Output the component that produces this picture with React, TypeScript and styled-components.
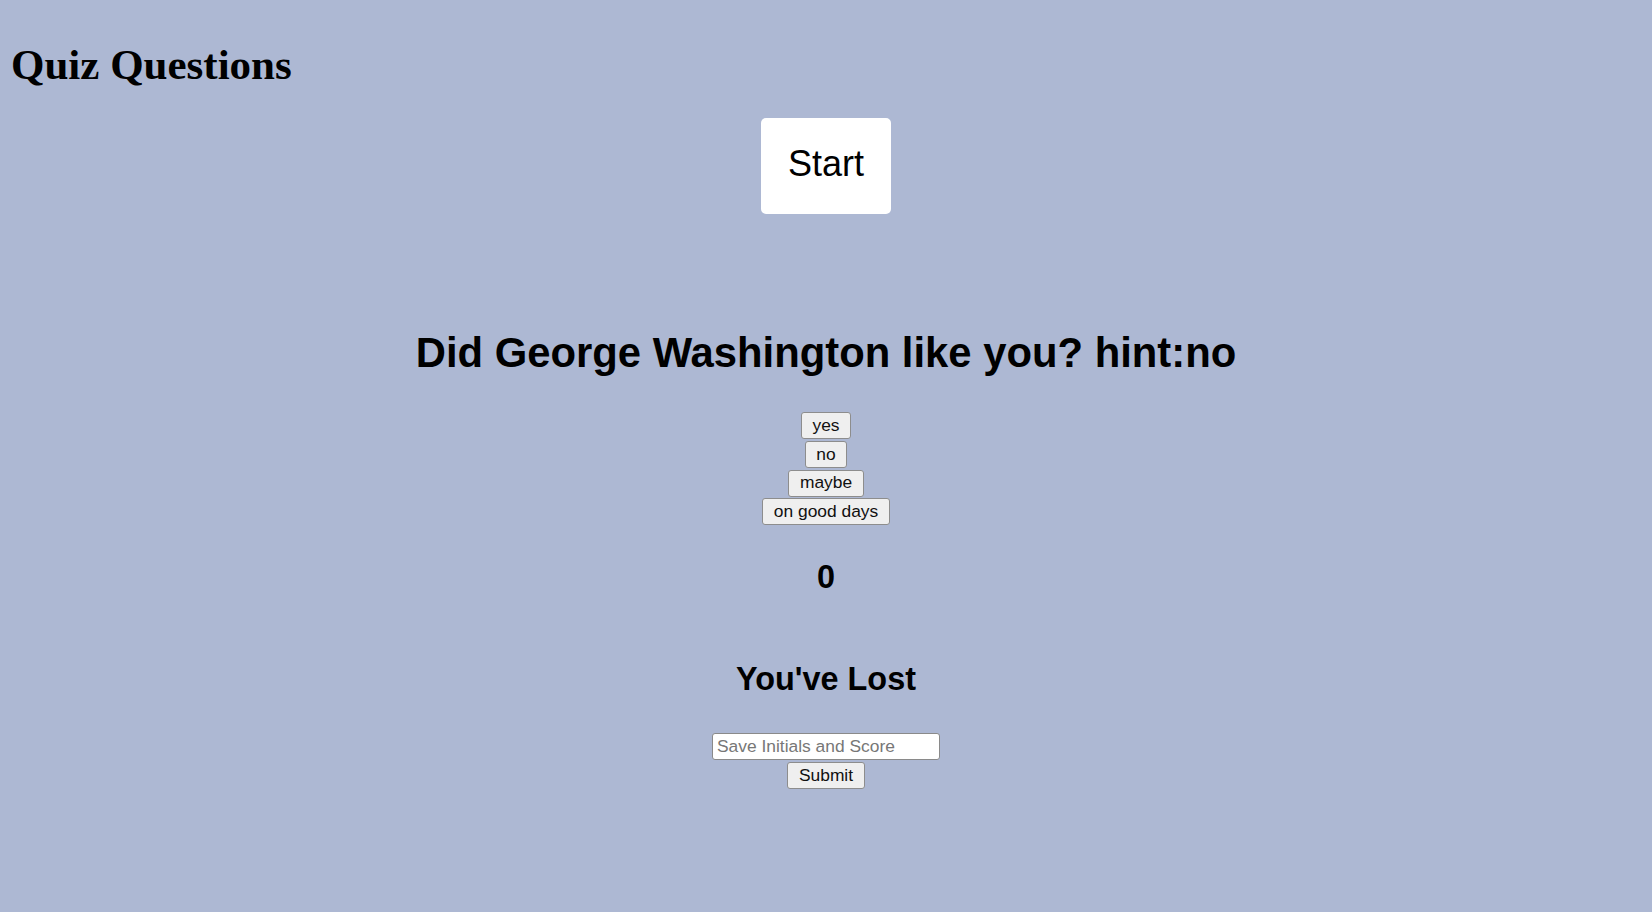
import React from "react";
import styled, { createGlobalStyle } from "styled-components";

const GlobalStyle = createGlobalStyle`
  html, body {
    margin: 0;
    padding: 0;
    background: #adb8d3;
  }
  body {
    font-family: "Liberation Sans", Arial, sans-serif;
    color: #000;
    min-height: 912px;
  }
`;

const Page = styled.div`
  display: flex;
  flex-direction: column;
  min-height: 912px;
  box-sizing: border-box;
`;

const Title = styled.h1`
  margin: 41px 0 0 11px;
  font-family: "Liberation Serif", "Times New Roman", serif;
  font-weight: 700;
  font-size: 43px;
  line-height: 48px;
`;

const Main = styled.main`
  display: flex;
  flex-direction: column;
  align-items: center;
`;

const StartButton = styled.button`
  margin-top: 29px;
  width: 130px;
  height: 96px;
  padding: 0 0 4px;
  background: #ffffff;
  border: none;
  border-radius: 5px;
  font-family: "Liberation Sans", Arial, sans-serif;
  font-size: 36px;
  color: #000;
  cursor: pointer;
`;

const Question = styled.h2`
  margin: 114.6px 0 0;
  font-size: 41.8px;
  font-weight: 700;
  line-height: 48px;
  text-align: center;
`;

const Answers = styled.div`
  margin-top: 35.4px;
  display: flex;
  flex-direction: column;
  align-items: center;
  gap: 1.8px;
`;

const SmallButton = styled.button`
  height: 27px;
  padding: 0 10.6px;
  box-sizing: border-box;
  background: #efefef;
  border: 1.3px solid #8d8d8d;
  border-radius: 3px;
  font-family: "Liberation Sans", Arial, sans-serif;
  font-size: 17.4px;
  line-height: 1;
  color: #111;
  cursor: pointer;
`;

const Heading = styled.h2<{ $gap: number }>`
  margin: ${(p) => p.$gap}px 0 0;
  font-size: 32.4px;
  font-weight: 700;
  line-height: 36px;
  text-align: center;
`;

const SaveForm = styled.form`
  margin-top: 35.5px;
  display: flex;
  flex-direction: column;
  align-items: center;
  gap: 2px;
`;

const Initials = styled.input`
  width: 228px;
  height: 27px;
  box-sizing: border-box;
  padding: 1px 4px;
  background: #fff;
  border: 1.3px solid #8a8a8a;
  border-radius: 3px;
  font-family: "Liberation Sans", Arial, sans-serif;
  font-size: 17.4px;
  color: #000;
  &::placeholder {
    color: #777;
  }
`;

const answers = ["yes", "no", "maybe", "on good days"];

export default function App() {
  return (
    <>
      <GlobalStyle />
      <Page>
        <Title>Quiz Questions</Title>
        <Main>
          <StartButton type="button">Start</StartButton>
          <Question>Did George Washington like you? hint:no</Question>
          <Answers>
            {answers.map((a) => (
              <SmallButton key={a} type="button">
                {a}
              </SmallButton>
            ))}
          </Answers>
          <Heading $gap={34}>0</Heading>
          <Heading $gap={66}>You've Lost</Heading>
          <SaveForm onSubmit={(e) => e.preventDefault()}>
            <Initials placeholder="Save Initials and Score" />
            <SmallButton type="submit">Submit</SmallButton>
          </SaveForm>
        </Main>
      </Page>
    </>
  );
}
